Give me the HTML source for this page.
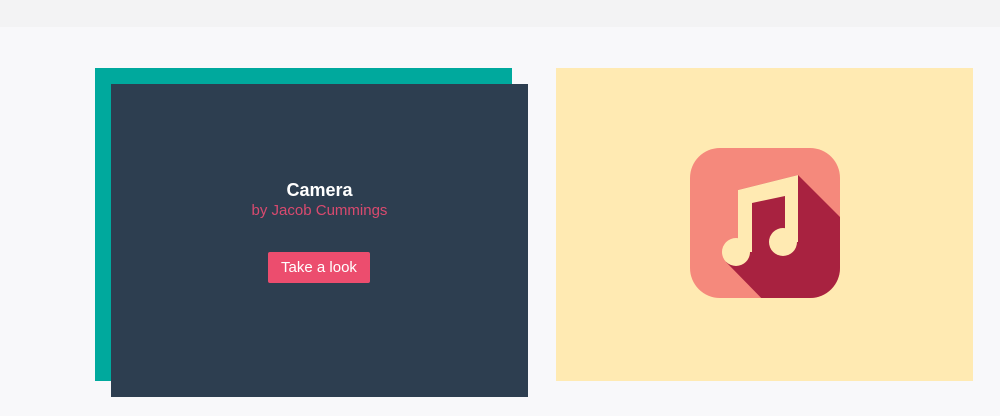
<!DOCTYPE html>
<html><head><style>
body{margin:0;width:1000px;height:416px;background:#f8f8fa;position:relative;overflow:hidden;font-family:"Liberation Sans",sans-serif}
.top{position:absolute;left:0;top:0;width:1000px;height:27px;background:#f3f3f4}
.teal{position:absolute;left:95px;top:68px;width:417px;height:313px;background:#00a99d}
.dark{position:absolute;left:111px;top:84px;width:417px;height:313px;background:#2d3e50;text-align:center;color:#fff}
.yel{position:absolute;left:556px;top:68px;width:417px;height:313px;background:#ffeab2}
h3{margin:0;position:absolute;top:96px;width:100%;font-size:18px;font-weight:bold}
.by{position:absolute;top:118px;width:100%;font-size:15px;color:#d94a6f}
.btn{position:absolute;left:157px;top:168px;width:102px;height:31px;line-height:31px;background:#ec4d6e;border-radius:2px;font-size:15px}
</style></head><body>
<div class="top"></div>
<div class="teal"></div>
<div class="dark"><h3>Camera</h3><div class="by">by Jacob Cummings</div><div class="btn">Take a look</div></div>
<div class="yel"></div>
<svg style="position:absolute;left:0;top:0" width="1000" height="416">
<defs><clipPath id="c"><rect x="690" y="148" width="150" height="150" rx="30"/></clipPath></defs>
<rect x="690" y="148" width="150" height="150" rx="30" fill="#f5897c"/>
<polygon clip-path="url(#c)" fill="#a82240" points="798,175 930,307 866,405 726,262 738,252 738,190"/>
<g fill="#ffeab2">
<polygon points="738,190 798,175 798,242 785,242 785,196 752,203 752,252 738,252"/>
<circle cx="736" cy="252" r="14"/>
<circle cx="783" cy="242" r="14"/>
</g>
</svg>
</body></html>
